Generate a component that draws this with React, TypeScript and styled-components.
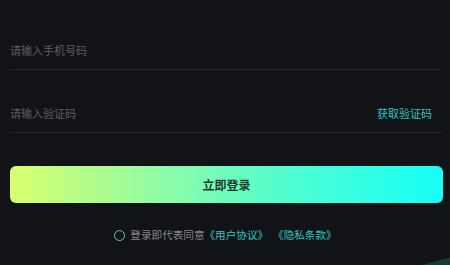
import React, { useState } from "react"
import styled, { createGlobalStyle } from "styled-components"

const GlobalStyle = createGlobalStyle`
  html, body {
    margin: 0;
    padding: 0;
    background: #121317;
  }
  body {
    font-family: "Noto Sans CJK SC", "Noto Sans", sans-serif;
  }
`

const Page = styled.div`
  position: relative;
  width: 450px;
  height: 265px;
  overflow: hidden;
  background: #121317;
  padding: 31px 7px 0 10px;
  box-sizing: border-box;
`

const Field = styled.div`
  display: flex;
  align-items: center;
  justify-content: space-between;
  height: 38px;
  border-bottom: 1px solid #222429;
  & + & {
    margin-top: 24px;
  }
`

const Input = styled.input`
  flex: 1;
  background: transparent;
  border: none;
  outline: none;
  padding: 0;
  font-family: inherit;
  font-size: 11px;
  color: #e6e6e6;
  &::placeholder {
    color: #5d5e62;
  }
`

const CodeBtn = styled.button`
  background: none;
  border: none;
  padding: 0 11px 0 0;
  font-family: inherit;
  font-size: 11px;
  color: #2dc7c1;
  cursor: pointer;
`

const Submit = styled.button`
  display: block;
  width: 100%;
  height: 37px;
  margin-top: 33px;
  border: none;
  border-radius: 6px;
  background: linear-gradient(90deg, #d8ff6e 0%, #8ffca6 35%, #4dfdd2 65%, #16fff7 100%);
  font-family: inherit;
  font-size: 12px;
  font-weight: 700;
  color: #1b3a30;
  cursor: pointer;
`

const Agree = styled.div`
  display: flex;
  align-items: center;
  justify-content: center;
  margin-top: 25px;
  padding-right: 2px;
  font-size: 10.6px;
  line-height: 14px;
  color: #85868a;
`

const Radio = styled.span<{ $on: boolean }>`
  width: 9px;
  height: 9px;
  border-radius: 50%;
  border: 1.2px solid #5fcfa6;
  margin-right: 5px;
  background: ${p => (p.$on ? "#5fcfa6" : "transparent")};
  cursor: pointer;
`

const Link = styled.a`
  color: #2dc7c1;
  text-decoration: none;
  & + & {
    margin-left: 5px;
  }
`

const Glow = styled.div`
  position: absolute;
  left: 213px;
  top: 251px;
  width: 600px;
  height: 600px;
  border-radius: 50%;
  background: linear-gradient(180deg, #1c3c36 0%, #15302b 10%);
`

export default function App() {
  const [agreed, setAgreed] = useState(false)

  return (
    <>
      <GlobalStyle />
      <Page>
        <Field>
          <Input placeholder="请输入手机号码" />
        </Field>
        <Field>
          <Input placeholder="请输入验证码" />
          <CodeBtn type="button">获取验证码</CodeBtn>
        </Field>
        <Submit type="button">立即登录</Submit>
        <Agree>
          <Radio $on={agreed} onClick={() => setAgreed(a => !a)} />
          登录即代表同意
          <Link>《用户协议》</Link>
          <Link>《隐私条款》</Link>
        </Agree>
        <Glow />
      </Page>
    </>
  )
}
